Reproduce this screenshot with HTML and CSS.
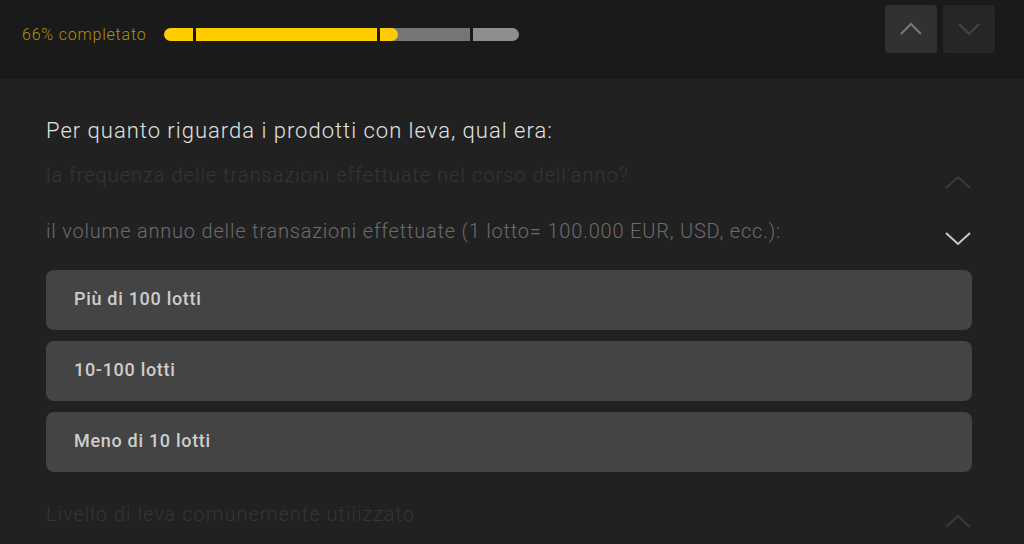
FILE: index.html
```html
<!DOCTYPE html>
<html lang="it">
<head>
  <meta charset="UTF-8" />
  <meta name="viewport" content="width=device-width, initial-scale=1.0"/>
  <title>Questionario</title>
  <link rel="stylesheet" href="styles.css">
</head>
<body>
  <header class="topbar">
    <div class="progress">
      <span class="progress-label">66% completato</span>
      <div class="steps">
        <div class="step done" style="width: 29px;"></div>
        <div class="step done" style="width: 181px;"></div>
        <div class="step" style="width: 90px;"><div class="fill" style="width: 20%;"></div></div>
        <div class="step light" style="width: 46px;"></div>
      </div>
    </div>
    <div class="nav">
      <button class="nav-btn up">
        <svg width="24" height="14" viewBox="0 0 24 14"><polyline points="2,12 12,2 22,12" /></svg>
      </button>
      <button class="nav-btn down">
        <svg width="24" height="14" viewBox="0 0 24 14"><polyline points="2,2 12,12 22,2" /></svg>
      </button>
    </div>
  </header>

  <main class="content">
    <h1 class="title">Per quanto riguarda i prodotti con leva, qual era:</h1>

    <div class="question faded">
      <span>la frequenza delle transazioni effettuate nel corso dell'anno?</span>
      <svg class="chev" width="28" height="16" viewBox="0 0 28 16"><polyline points="2,14 14,3 26,14" /></svg>
    </div>

    <div class="question current">
      <span>il volume annuo delle transazioni effettuate (1 lotto= 100.000 EUR, USD, ecc.):</span>
      <svg class="chev" width="28" height="16" viewBox="0 0 28 16"><polyline points="2,3 14,14 26,3" /></svg>
    </div>

    <div class="options">
      <button class="option">Più di 100 lotti</button>
      <button class="option">10-100 lotti</button>
      <button class="option">Meno di 10 lotti</button>
    </div>

    <div class="question faded last">
      <span>Livello di leva comunemente utilizzato</span>
      <svg class="chev" width="28" height="16" viewBox="0 0 28 16"><polyline points="2,14 14,3 26,14" /></svg>
    </div>
  </main>
</body>
</html>
```

FILE: styles.css
```css
body {
  margin: 0;
  background: #212121;
  font-family: Roboto, 'Noto Sans', sans-serif;
  overflow: hidden;
}

.topbar {
  display: flex;
  align-items: flex-start;
  justify-content: space-between;
  height: 79px;
  box-sizing: border-box;
  padding: 5px 29px 0 22px;
  background: #1a1a1a;
}

.progress {
  display: flex;
  align-items: center;
  height: 48px;
  margin-top: 5px;
}

.progress-label {
  font-size: 16px;
  font-weight: 300;
  letter-spacing: 0.8px;
  color: #b39100;
  margin-right: 17px;
}

.steps {
  display: flex;
  gap: 3px;
  height: 13px;
}

.step {
  height: 13px;
  background: #767676;
  overflow: hidden;
}

.step:first-child {
  border-radius: 7px 0 0 7px;
}

.step:last-child {
  border-radius: 0 7px 7px 0;
}

.step.done {
  background: #ffcc00;
}

.step.light {
  background: #8e8e8e;
}

.fill {
  height: 100%;
  background: #ffcc00;
  border-radius: 0 7px 7px 0;
}

.nav {
  display: flex;
  gap: 6px;
}

.nav-btn {
  width: 52px;
  height: 48px;
  border: none;
  border-radius: 4px;
  padding: 0;
  display: flex;
  align-items: center;
  justify-content: center;
  cursor: pointer;
}

.nav-btn svg polyline {
  fill: none;
  stroke-width: 2;
}

.nav-btn.up {
  background: #313131;
}

.nav-btn.up svg polyline {
  stroke: #7a7a7a;
}

.nav-btn.down {
  background: #262626;
}

.nav-btn.down svg polyline {
  stroke: #444;
}

.content {
  padding: 39px 52px 0 46px;
}

.title {
  margin: 0 0 3px;
  font-size: 22px;
  line-height: 26px;
  font-weight: 300;
  letter-spacing: 1px;
  color: #e2e2e2;
}

.question {
  display: flex;
  justify-content: space-between;
  align-items: center;
  height: 56px;
  font-size: 20px;
  font-weight: 300;
  letter-spacing: 1px;
}

.question .chev {
  margin-top: 14px;
}

.chev polyline {
  fill: none;
  stroke-width: 2;
}

.question.faded {
  color: #353535;
}

.question.faded .chev polyline {
  stroke: #3a3a3a;
}

.question.current {
  color: #6c6c6c;
  letter-spacing: 0.8px;
}

.question.current .chev polyline {
  stroke: #c9c9c9;
}

.question.last {
  margin-top: 14px;
}

.options {
  display: flex;
  flex-direction: column;
  gap: 11px;
  margin-top: 11px;
}

.option {
  height: 60px;
  border: none;
  border-radius: 8px;
  background: #444;
  padding: 0 28px 4px;
  text-align: left;
  font-family: Roboto, 'Noto Sans', sans-serif;
  font-size: 18px;
  font-weight: 500;
  letter-spacing: 0.7px;
  color: #cdcdcd;
  cursor: pointer;
}
```
